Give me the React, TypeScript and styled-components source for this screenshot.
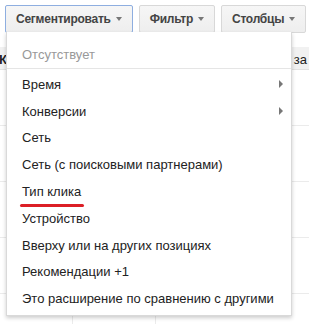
import React from "react";
import styled, { createGlobalStyle } from "styled-components";

const GlobalStyle = createGlobalStyle`
    html, body {
        margin: 0;
        padding: 0;
        background: #fff;
        font-family: Arial, "Liberation Sans", sans-serif;
    }
`;

const items = [
    { label: "Время", sub: true },
    { label: "Конверсии", sub: true },
    { label: "Сеть" },
    { label: "Сеть (с поисковыми партнерами)" },
    { label: "Тип клика", marked: true },
    { label: "Устройство" },
    { label: "Вверху или на других позициях" },
    { label: "Рекомендации +1" },
    { label: "Это расширение по сравнению с другими" },
];

const App = () => {
    return (
        <Page>
            <GlobalStyle />
            <Toolbar>
                <ToolButton $active>
                    Сегментировать <Caret />
                </ToolButton>
                <ToolButton>
                    Фильтр <Caret />
                </ToolButton>
                <ToolButton>
                    Столбцы <Caret />
                </ToolButton>
            </Toolbar>
            <Table>
                <HeaderRow>
                    <span>К</span>
                    <span>а за</span>
                </HeaderRow>
                <Row />
                <Row />
                <Row />
                <Row />
                <LastRow>
                    <ColLine />
                    <ColLine />
                </LastRow>
            </Table>
            <Menu>
                <EmptyItem>Отсутствует</EmptyItem>
                <Divider />
                {items.map((item) => (
                    <MenuItem key={item.label}>
                        <ItemLabel $marked={item.marked}>{item.label}</ItemLabel>
                        {item.sub && <SubArrow />}
                    </MenuItem>
                ))}
            </Menu>
        </Page>
    );
};

const Page = styled.div`
    position: relative;
    width: 309px;
    height: 324px;
    overflow: hidden;
`;

const Toolbar = styled.div`
    display: flex;
    gap: 5px;
    padding: 5px 0 0 5px;
`;

const ToolButton = styled.div<{ $active?: boolean }>`
    display: flex;
    align-items: center;
    gap: 5px;
    height: 26px;
    padding: 0 10px;
    border: 1px solid ${(p) => (p.$active ? "#8eaee0" : "#d8d8d8")};
    border-radius: 2px;
    background: linear-gradient(#f6f6f6, #eeeeee);
    font-size: 12px;
    font-weight: bold;
    letter-spacing: -0.25px;
    color: #444;
    white-space: nowrap;

    & + & {
        margin-left: 1px;
    }
`;

const Caret = styled.span`
    width: 0;
    height: 0;
    border-left: 3.5px solid transparent;
    border-right: 3.5px solid transparent;
    border-top: 4px solid #777;
`;

const Table = styled.div`
    margin-top: 14px;
    display: flex;
    flex-direction: column;
`;

const HeaderRow = styled.div`
    display: flex;
    justify-content: space-between;
    align-items: center;
    height: 20px;
    padding-top: 2px;
    background: #f1f1f1;
    border-bottom: 1px solid #e2e2e2;
    font-size: 13px;
    color: #222;

    span:first-child {
        margin-left: -1px;
        font-weight: bold;
    }
    span:last-child {
        margin-right: 2px;
    }
`;

const Row = styled.div`
    height: 55px;
    border-bottom: 1px solid #ebebeb;
`;

const LastRow = styled.div`
    display: flex;
    gap: 82px;
    padding-left: 72px;
    height: 40px;
`;

const ColLine = styled.div`
    width: 1px;
    background: #ebebeb;
`;

const Menu = styled.div`
    position: absolute;
    left: 6px;
    top: 32px;
    width: 284px;
    padding: 9px 0 0;
    height: 268px;
    padding-bottom: 6px;
    background: #fff;
    border: 1px solid rgba(0, 0, 0, 0.15);
    border-top: none;
    box-shadow: 0 2px 4px rgba(0, 0, 0, 0.2);
    font-size: 13px;
`;

const EmptyItem = styled.div`
    height: 27px;
    line-height: 27px;
    padding-left: 15px;
    color: #999;
`;

const Divider = styled.div`
    height: 1px;
    margin: 0 0 2px;
    background: #e5e5e5;
`;

const MenuItem = styled.div`
    display: flex;
    align-items: center;
    justify-content: space-between;
    height: 26.8px;
    padding: 0 8px 0 15px;
    color: #222;
`;

const ItemLabel = styled.span<{ $marked?: boolean }>`
    position: relative;
    white-space: nowrap;

    &::after {
        content: "";
        display: ${(p) => (p.$marked ? "block" : "none")};
        position: absolute;
        left: -2px;
        right: -3px;
        bottom: -8px;
        height: 3px;
        border-radius: 2px;
        background: #dc1f26;
    }
`;

const SubArrow = styled.span`
    width: 0;
    height: 0;
    border-top: 4px solid transparent;
    border-bottom: 4px solid transparent;
    border-left: 4px solid #777;
`;

export default App;
